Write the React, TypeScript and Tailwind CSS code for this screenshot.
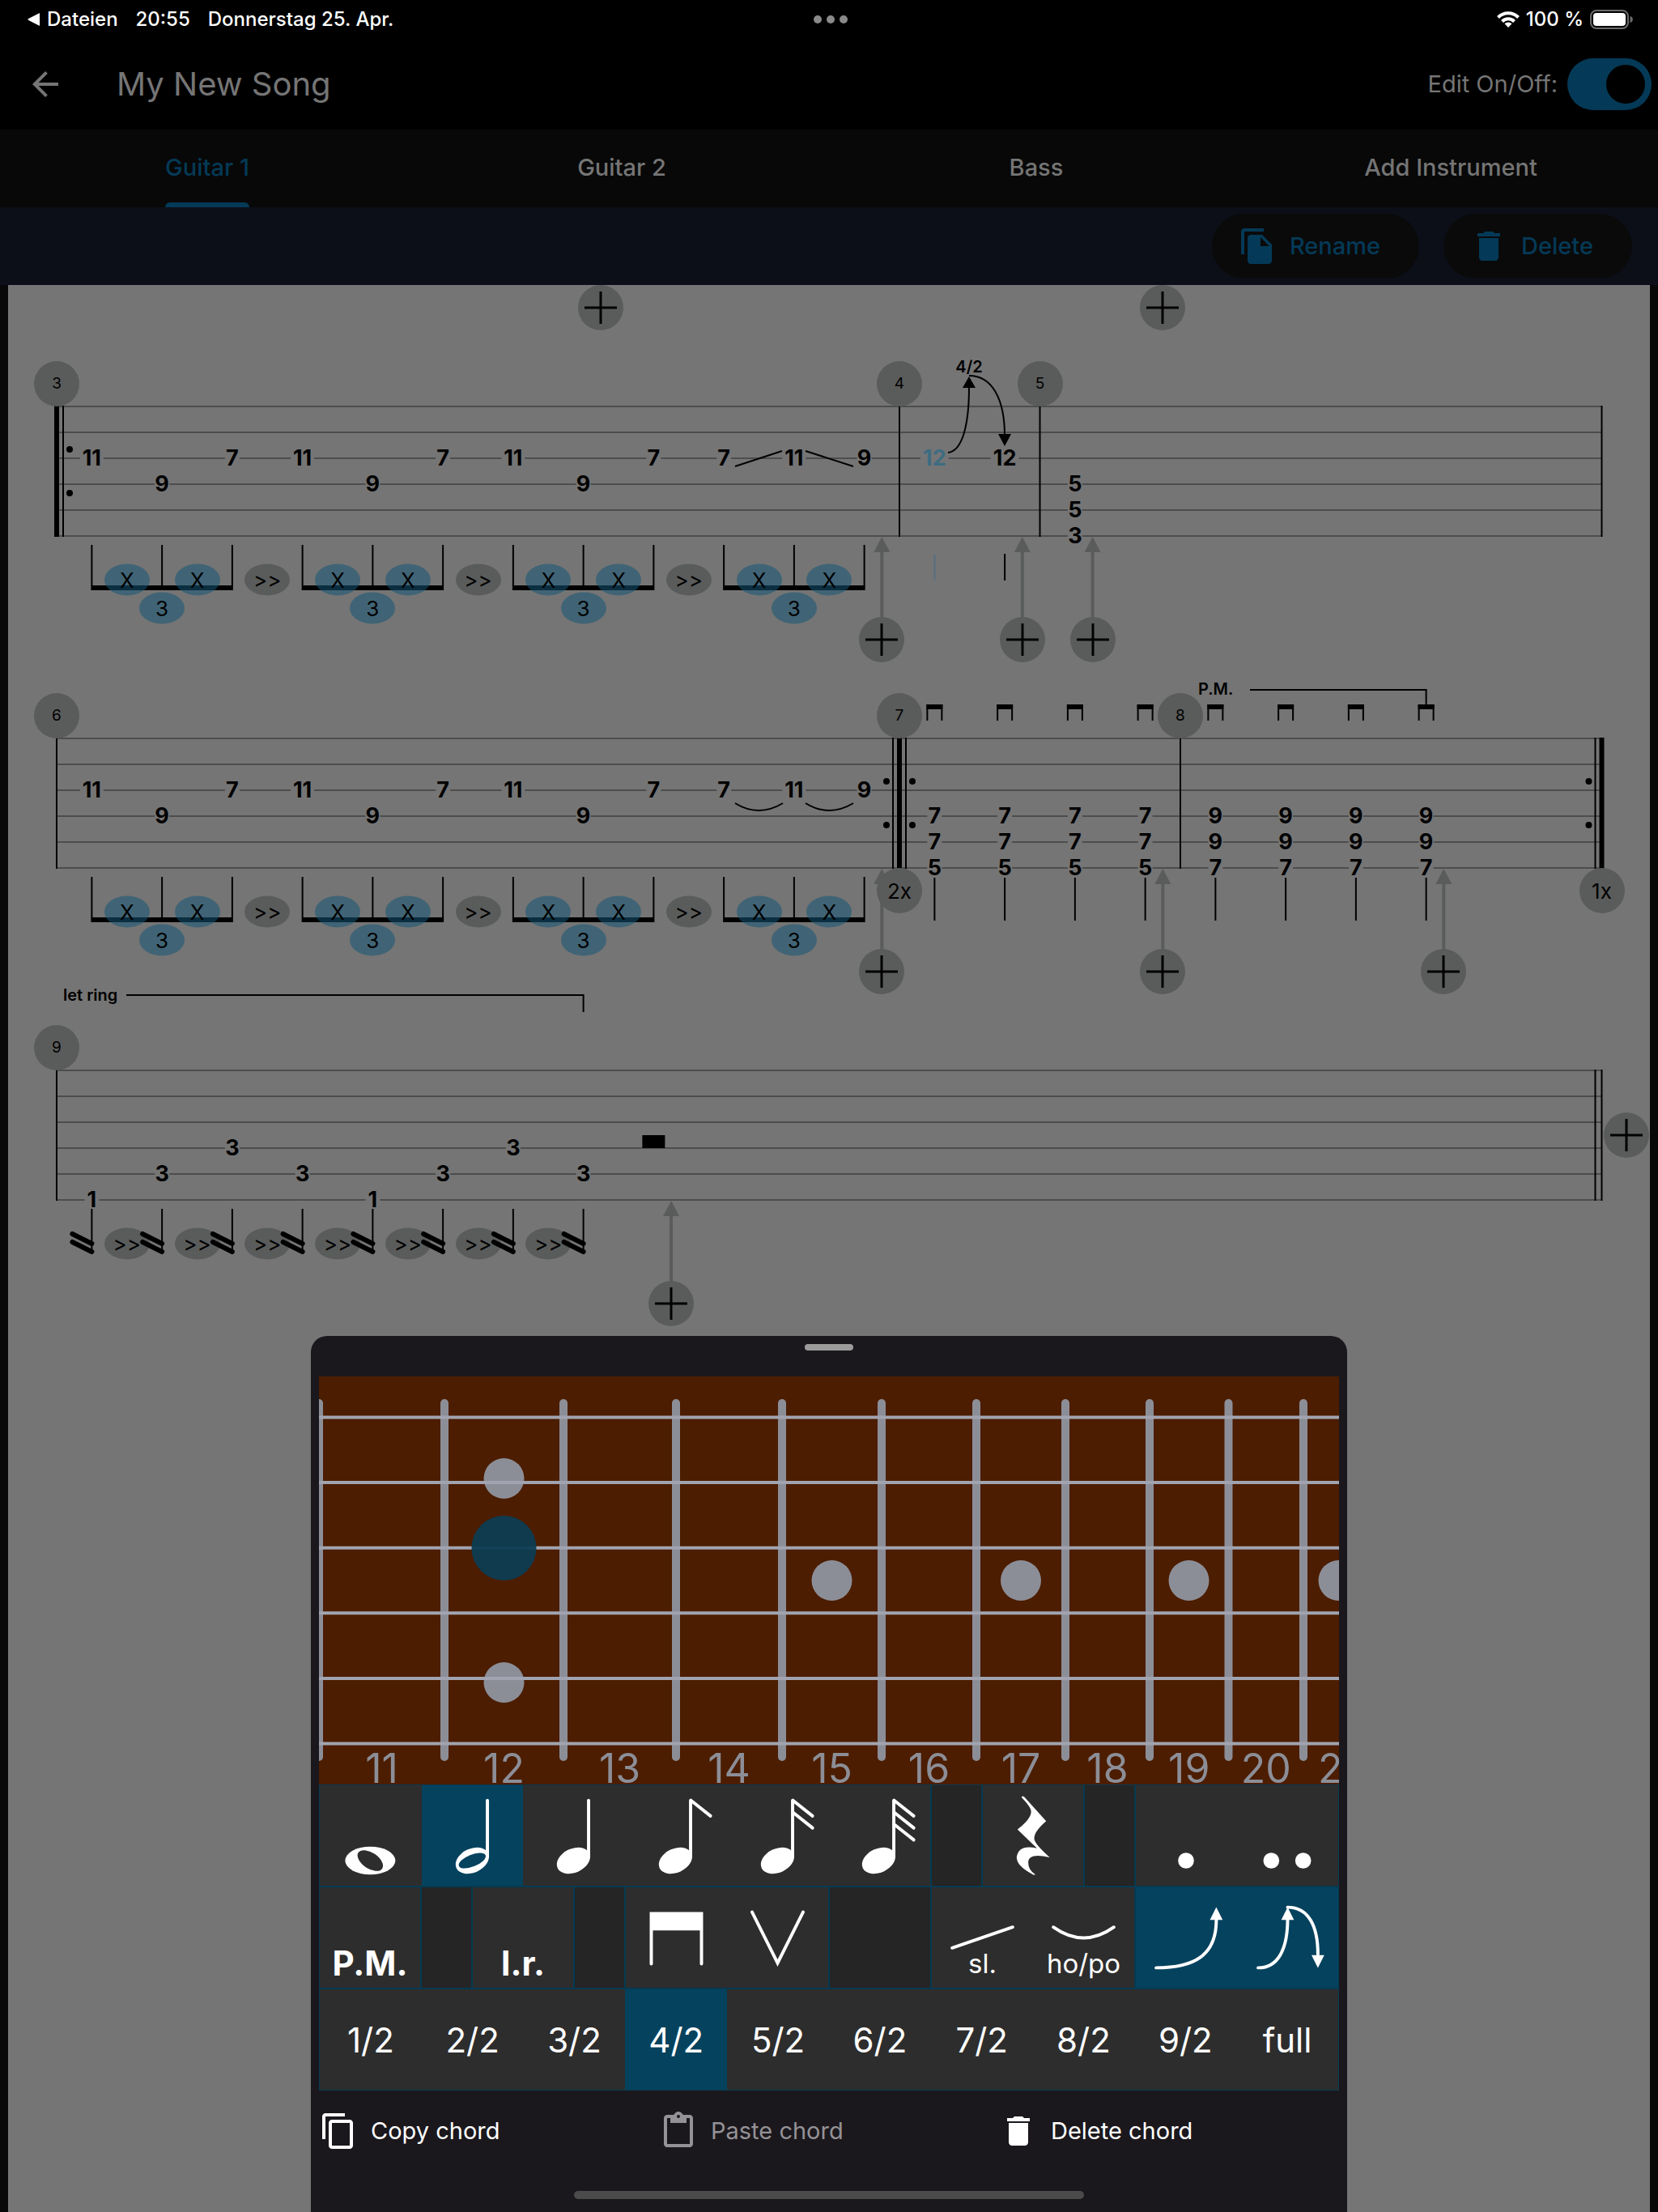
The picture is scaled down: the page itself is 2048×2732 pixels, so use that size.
import React, { useState } from 'react';
import {
  MdArrowBack,
  MdContentCopy,
  MdContentPaste,
  MdDelete,
  MdFileCopy,
} from 'react-icons/md';
import clsx from 'clsx';

// Score geometry, in canvas units
const CANVAS_W = 2028;
const CANVAS_H = 1300;
const LEFT = 60;
const STEP = 86.75;
const LINE_GAP = 32;
const STAFF_H = LINE_GAP * 5;
const STAFF_TOPS = [150, 560, 970];
const PAPER = '#757575';
const GREY = '#5a5c5b';

const col = (index: number) => index * STEP;

interface TabNote {
  at: number;
  line: number;
  fret: string;
  active?: boolean;
}

const tripletNotes: TabNote[] = [
  '11', '9', '7', '11', '9', '7', '11', '9', '7', '7', '11', '9',
].map((fret, i) => ({
  at: i + 0.5,
  line: fret === '9' && i !== 11 ? 3 : 2,
  fret,
}));

const chord = (at: number, frets: string[]): TabNote[] =>
  frets.map((fret, i) => ({ at, line: i + 3, fret }));

const rows: TabNote[][] = [
  [
    ...tripletNotes,
    { at: 12.5, line: 2, fret: '12', active: true },
    { at: 13.5, line: 2, fret: '12' },
    ...chord(14.5, ['5', '5', '3']),
  ],
  [
    ...tripletNotes,
    ...[12.5, 13.5, 14.5, 15.5].flatMap((at) => chord(at, ['7', '7', '5'])),
    ...[16.5, 17.5, 18.5, 19.5].flatMap((at) => chord(at, ['9', '9', '7'])),
  ],
  [5, 4, 3, 4, 5, 4, 3, 4].map((line, i) => ({
    at: i + 0.5,
    line,
    fret: line === 5 ? '1' : '3',
  })),
];

const Staff: React.FC<{ notes: TabNote[] }> = ({ notes }) => (
  <>
    {[0, 1, 2, 3, 4, 5].map((n) => (
      <path key={n} d={`M0 ${n * LINE_GAP}H${col(22)}`} stroke="#4d4d4d" strokeWidth="2" />
    ))}
    {notes.map(({ at, line, fret, active }) => {
      const gap = fret === '11' ? 29 : fret.length === 2 ? 35 : 18;
      return (
        <g key={`${at}-${line}`}>
          <rect x={col(at) - gap / 2} y={line * LINE_GAP - 3} width={gap} height="6" fill={PAPER} />
          <text
            x={col(at)}
            y={line * LINE_GAP + 9}
            textAnchor="middle"
            fontSize="27"
            fontWeight="700"
            fill={active ? '#3d6c82' : '#000'}
          >
            {fret}
          </text>
        </g>
      );
    })}
  </>
);

const Bar: React.FC<{ at: number; width?: number; shift?: number }> = ({ at, width = 2, shift = 0 }) => (
  <path d={`M${col(at) + shift} -1V${STAFF_H + 1}`} stroke="#000" strokeWidth={width} />
);

const RepeatDots: React.FC<{ at: number; shift: number }> = ({ at, shift }) => (
  <>
    <circle cx={col(at) + shift} cy="53" r="4" />
    <circle cx={col(at) + shift} cy="107" r="4" />
  </>
);

const TripletBeams = () => (
  <>
    {[0.5, 3.5, 6.5, 9.5].map((at) => (
      <g key={at} stroke="#000" strokeWidth="2">
        <path d={`M${col(at)} 171V227M${col(at + 1)} 171V227M${col(at + 2)} 171V227`} />
        <path d={`M${col(at)} 224H${col(at + 2)}`} strokeWidth="6" />
      </g>
    ))}
  </>
);

const InsertArrow: React.FC<{ at: number }> = ({ at }) => (
  <g transform={`translate(${col(at)} 0)`} fill={GREY}>
    <path d="M0 161L10 180H-10Z" />
    <path d="M-2 178H2V264H-2Z" />
  </g>
);

const Score = () => (
  <svg
    viewBox={`0 0 ${CANVAS_W} ${CANVAS_H}`}
    className="block w-full"
    fontFamily="Inter, 'Liberation Sans', sans-serif"
    aria-label="Guitar 1 tablature"
  >
    {/* bars 3 - 5 */}
    <g transform={`translate(${LEFT} ${STAFF_TOPS[0]})`}>
      <Staff notes={rows[0]} />
      <Bar at={0} width={6} />
      <Bar at={0} shift={8} />
      <RepeatDots at={0} shift={16} />
      <Bar at={12} />
      <Bar at={14} />
      <Bar at={22} />
      <TripletBeams />
      <path d="M838 74L896 55M925 55L984 74" stroke="#000" strokeWidth="2" />
      {/* bend and release */}
      <g fill="none" stroke="#000" strokeWidth="2">
        <path d="M1101 57C1119 55 1127 22 1127 -24" />
        <path d="M1127 -38C1155 -38 1171 -10 1171 36" />
      </g>
      <path d="M1127 -37L1135 -23H1119ZM1171 49L1163 34H1179Z" />
      <text x="1127" y="-42" textAnchor="middle" fontSize="20" fontWeight="600">
        4/2
      </text>
      <path d={`M${col(12.5)} 183V214`} stroke="#566f80" strokeWidth="2" />
      <path d={`M${col(13.5)} 182V215`} stroke="#000" strokeWidth="2" />
      {[11.75, 13.75, 14.75].map((at) => (
        <InsertArrow key={at} at={at} />
      ))}
    </g>

    {/* bars 6 - 8 */}
    <g transform={`translate(${LEFT} ${STAFF_TOPS[1]})`}>
      <Staff notes={rows[1]} />
      <Bar at={0} />
      <Bar at={12} shift={-8} />
      <Bar at={12} width={6} />
      <Bar at={12} shift={8} />
      <RepeatDots at={12} shift={-16} />
      <RepeatDots at={12} shift={16} />
      <Bar at={16} />
      <Bar at={22} shift={-8} />
      <Bar at={22} width={6} />
      <RepeatDots at={22} shift={-16} />
      <TripletBeams />
      <path d="M838 80Q867 98 897 80M925 80Q954 98 984 80" fill="none" stroke="#000" strokeWidth="2" />
      {[12.5, 13.5, 14.5, 15.5, 16.5, 17.5, 18.5, 19.5].map((at) => (
        <g key={at} transform={`translate(${col(at)} 0)`}>
          <path d="M-9 -22V-41H9V-22" fill="none" stroke="#000" strokeWidth="2" />
          <path d="M-10 -42H10V-36H-10Z" />
          <path d="M0 172V225" stroke="#000" strokeWidth="2" />
        </g>
      ))}
      <text x="1410" y="-54" fontSize="20" fontWeight="600">
        P.M.
      </text>
      <path d={`M1474 -60H${col(19.5)}V-41`} fill="none" stroke="#000" strokeWidth="2" />
      {[11.75, 15.75, 19.75].map((at) => (
        <InsertArrow key={at} at={at} />
      ))}
    </g>

    {/* bar 9 */}
    <g transform={`translate(${LEFT} ${STAFF_TOPS[2]})`}>
      <Staff notes={rows[2]} />
      <Bar at={0} />
      <Bar at={22} shift={-8} />
      <Bar at={22} />
      <path d={`M${col(8.5) - 14} 80h28v16h-28Z`} />
      <text x="8" y="-86" fontSize="20" fontWeight="600">
        let ring
      </text>
      <path d={`M86 -93H${col(7.5)}V-72`} fill="none" stroke="#000" strokeWidth="2" />
      <InsertArrow at={8.75} />
    </g>
  </svg>
);

// Tremolo strokes lie over the merge buttons
const Tremolo = () => (
  <svg
    viewBox={`0 0 ${CANVAS_W} ${CANVAS_H}`}
    className="pointer-events-none absolute inset-0 block w-full"
    aria-hidden="true"
  >
    <g transform={`translate(${LEFT} ${STAFF_TOPS[2]})`} stroke="#000">
      {rows[2].map(({ at }) => (
        <g key={at} transform={`translate(${col(at)} 0)`}>
          <path d="M0 171V224" strokeWidth="2" />
          <path d="M-24 202L0 214M-24 212L0 224" strokeWidth="6" strokeLinecap="round" />
        </g>
      ))}
    </g>
  </svg>
);

interface SpotProps {
  row: number;
  at: number;
  y: number;
  label: string;
  className: string;
  children: React.ReactNode;
}

const Spot: React.FC<SpotProps> = ({ row, at, y, label, className, children }) => (
  <button
    type="button"
    aria-label={label}
    className={clsx(
      'absolute flex -translate-x-1/2 -translate-y-1/2 items-center justify-center text-black',
      className
    )}
    style={{
      left: `${((LEFT + col(at)) / CANVAS_W) * 100}%`,
      top: `${((STAFF_TOPS[0] + row * 410 + y) / CANVAS_H) * 100}%`,
    }}
  >
    {children}
  </button>
);

const AddSpot: React.FC<{ row: number; at: number; y?: number }> = ({ row, at, y = 288 }) => (
  <Spot row={row} at={at} y={y} label="Insert" className="size-14 rounded-full bg-[#5a5c5b]">
    <svg viewBox="0 0 40 40" className="size-10" stroke="currentColor" strokeWidth="3">
      <path d="M20 0V40M0 20H40" />
    </svg>
  </Spot>
);

const round = 'size-14 rounded-full bg-[#5a5c5b]';
const greyPill = 'h-[39px] w-14 rounded-[50%] bg-[#5a5c5b] text-[26px]';
const bluePill = 'h-[39px] w-14 rounded-[50%] bg-[#145674]/55 text-[26px]';

const ScoreControls = () => (
  <>
    <AddSpot row={-1} at={7.75} />
    <AddSpot row={-1} at={15.75} />
    {[11.75, 13.75, 14.75].map((at) => (
      <AddSpot key={at} row={0} at={at} />
    ))}
    {[11.75, 15.75, 19.75].map((at) => (
      <AddSpot key={at} row={1} at={at} />
    ))}
    <AddSpot row={2} at={8.75} />
    <AddSpot row={2} at={22.35} y={80} />

    {[
      [0, 0, 3],
      [0, 12, 4],
      [0, 14, 5],
      [1, 0, 6],
      [1, 12, 7],
      [1, 16, 8],
      [2, 0, 9],
    ].map(([row, at, bar]) => (
      <Spot key={bar} row={row} at={at} y={-28} label={`Bar ${bar}`} className={clsx(round, 'text-[19px]')}>
        {bar}
      </Spot>
    ))}
    <Spot row={1} at={12} y={188} label="Repeat 2x" className={clsx(round, 'text-[26px]')}>
      2x
    </Spot>
    <Spot row={1} at={22} y={188} label="Repeat 1x" className={clsx(round, 'text-[26px]')}>
      1x
    </Spot>

    {[0, 1].map((row) =>
      [0, 3, 6, 9].map((start) => (
        <React.Fragment key={`${row}-${start}`}>
          <Spot row={row} at={start + 1} y={214} label="Split" className={bluePill}>
            X
          </Spot>
          <Spot row={row} at={start + 2} y={214} label="Split" className={bluePill}>
            X
          </Spot>
          <Spot row={row} at={start + 1.5} y={249} label="Triplet" className={bluePill}>
            3
          </Spot>
          {start < 9 && (
            <Spot row={row} at={start + 3} y={214} label="Merge" className={greyPill}>
              &gt;&gt;
            </Spot>
          )}
        </React.Fragment>
      ))
    )}
    {[1, 2, 3, 4, 5, 6, 7].map((at) => (
      <Spot key={at} row={2} at={at} y={214} label="Merge" className={greyPill}>
        &gt;&gt;
      </Spot>
    ))}
  </>
);

const StatusBar = () => (
  <div className="grid h-12 grid-cols-3 items-center bg-black pr-[30px] pl-[34px] text-2xl font-medium text-white">
    <div className="flex items-center gap-[22px] whitespace-nowrap">
      <span className="flex items-center gap-2">
        <svg viewBox="0 0 16 16" className="size-4" fill="currentColor">
          <path d="M15 0.5V15.5Q15 16 14 15.6L0.8 8.8Q0 8 0.8 7.2L14 0.4Q15 0 15 0.5Z" />
        </svg>
        Dateien
      </span>
      <span>20:55</span>
      <span>Donnerstag 25. Apr.</span>
    </div>
    <div className="flex justify-center gap-1.5">
      <span className="size-2.5 rounded-full bg-[#8a8a8a]" />
      <span className="size-2.5 rounded-full bg-[#8a8a8a]" />
      <span className="size-2.5 rounded-full bg-[#8a8a8a]" />
    </div>
    <div className="flex items-center justify-end gap-2 whitespace-nowrap">
      <svg viewBox="0 0 28 20" className="h-5 w-7" fill="none" stroke="currentColor" strokeWidth="4">
        <path d="M1.5 7.5A17.5 17.5 0 0 1 26.5 7.5" />
        <path d="M6.5 12.5A10.5 10.5 0 0 1 21.5 12.5" />
        <path d="M14 20L9.5 15.3A6.5 6.5 0 0 1 18.5 15.3Z" fill="currentColor" stroke="none" />
      </svg>
      <span>100 %</span>
      <svg viewBox="0 0 54 24" className="h-6 w-[54px]">
        <rect x="1" y="1" width="46" height="22" rx="7" fill="none" stroke="#6b6b6b" strokeWidth="2" />
        <rect x="4" y="4" width="40" height="16" rx="4" fill="#fff" />
        <path d="M49.5 8C54 9 54 15 49.5 16Z" fill="#6b6b6b" />
      </svg>
    </div>
  </div>
);

const instruments = ['Guitar 1', 'Guitar 2', 'Bass', 'Add Instrument'];

const Tabs = () => {
  const [current, setCurrent] = useState('Guitar 1');

  return (
    <div role="tablist" className="grid h-24 grid-cols-4 bg-[#080808] text-[29px] font-medium">
      {instruments.map((name) => (
        <button
          key={name}
          type="button"
          role="tab"
          aria-selected={name === current}
          onClick={() => setCurrent(name)}
          className="flex justify-center"
        >
          <span
            className={clsx(
              'relative flex h-full items-center pb-0.5',
              name === current ? 'text-[#043a57]' : 'text-[#757575]'
            )}
          >
            {name}
            {name === current && (
              <span className="absolute inset-x-0 bottom-0 h-1.5 rounded-t-md bg-[#043a57]" />
            )}
          </span>
        </button>
      ))}
    </div>
  );
};

// Fret positions on the visible part of the neck
const frets = [0, 155, 302, 441, 572, 695, 812, 922, 1026, 1123.5, 1216, 1303];

const Fretboard = () => (
  <div className="overflow-x-clip bg-[#4c1d00]">
    <svg
      viewBox="0 0 1260 504"
      className="block w-full overflow-visible"
      fontFamily="Inter, 'Liberation Sans', sans-serif"
      aria-label="Fretboard"
    >
      <g stroke="#8c8e97" strokeWidth="10" strokeLinecap="round">
        {frets.map((x) => (
          <path key={x} d={`M${x} 33V470`} />
        ))}
      </g>
      <g fill="#8c8e97">
        <circle cx="228.5" cy="126" r="25" />
        <circle cx="228.5" cy="378" r="25" />
        <circle cx="633.5" cy="252" r="25" />
        <circle cx="867" cy="252" r="25" />
        <circle cx="1074.5" cy="252" r="25" />
        <circle cx="1259.5" cy="252" r="25" />
      </g>
      <g stroke="#a1a4b0" strokeWidth="4">
        {[0, 1, 2, 3, 4, 5].map((n) => (
          <path key={n} d={`M0 ${50.5 + n * 80.6}H1260`} />
        ))}
      </g>
      <circle cx="228.5" cy="212" r="40" fill="#0d3c52" fillOpacity="0.95" />
      <g fill="#8c8e97" fontSize="50" textAnchor="middle">
        {frets.slice(1).map((x, i) => (
          <text key={x} x={(x + frets[i]) / 2} y="502">
            {i + 11}
          </text>
        ))}
      </g>
    </svg>
  </div>
);

const Glyph: React.FC<{ children: React.ReactNode }> = ({ children }) => (
  <svg viewBox="0 0 126 126" className="size-full" fill="currentColor" aria-hidden="true">
    {children}
  </svg>
);

const stroke = {
  fill: 'none',
  stroke: 'currentColor',
  strokeWidth: 4,
  strokeLinecap: 'round' as const,
};

const Note: React.FC<{ flags?: number; hollow?: boolean }> = ({ flags = 0, hollow }) => (
  <Glyph>
    <ellipse cx="62.5" cy="94.5" rx="22" ry="15" transform="rotate(-25 62.5 94.5)" />
    {hollow && (
      <ellipse cx="62.5" cy="94.5" rx="18" ry="7.5" transform="rotate(-22 62.5 94.5)" fill="#05425e" />
    )}
    <path d="M81.500 19V90" {...stroke} />
    {[0, 1, 2].slice(0, flags).map((n) => (
      <path key={n} d={`M82 ${19 + n * 15}L106.5 ${38.5 + n * 15}`} {...stroke} />
    ))}
  </Glyph>
);

interface Cell {
  name: string;
  content: React.ReactNode;
  on?: boolean;
}

interface Group {
  span: string;
  cells: Cell[];
}

const spacer = (span: string): Group => ({ span, cells: [] });

const markText = 'flex size-full items-end justify-center pb-2 text-[42px] leading-[44px] font-bold';
const captionText = 'absolute inset-x-0 bottom-3 text-center text-[33px] leading-9';

const toolbar: Group[] = [
  {
    span: 'col-span-12',
    cells: [
      {
        name: 'Whole note',
        content: (
          <Glyph>
            <ellipse cx="62.5" cy="94.5" rx="31.5" ry="17.5" />
            <ellipse cx="62.5" cy="94.5" rx="18" ry="10" transform="rotate(34 62.5 94.5)" fill="#2d2d2d" />
          </Glyph>
        ),
      },
      { name: 'Half note', content: <Note hollow />, on: true },
      { name: 'Quarter note', content: <Note /> },
      { name: 'Eighth note', content: <Note flags={1} /> },
      { name: 'Sixteenth note', content: <Note flags={2} /> },
      { name: 'Thirty-second note', content: <Note flags={3} /> },
    ],
  },
  spacer('col-span-1'),
  {
    span: 'col-span-2',
    cells: [
      {
        name: 'Rest',
        content: (
          <Glyph>
            <path d="M48.5 15Q50 12.5 52 14.5L79.5 45Q62 60 65 69Q67 75 84 90.5Q57 84 57 97Q57 106 66 112Q64 113 62 111.5Q42 101 42.5 90Q45 73.5 68 79L43.5 55.5Q66 38 59 28Q57 24 48.5 15Z" />
          </Glyph>
        ),
      },
    ],
  },
  spacer('col-span-1'),
  {
    span: 'col-span-4',
    cells: [
      { name: 'Dotted', content: <Glyph><circle cx="62.5" cy="94.5" r="10" /></Glyph> },
      {
        name: 'Double dotted',
        content: (
          <Glyph>
            <circle cx="42.5" cy="94.5" r="10" />
            <circle cx="82.5" cy="94.5" r="10" />
          </Glyph>
        ),
      },
    ],
  },
  { span: 'col-span-2', cells: [{ name: 'Palm mute', content: <span className={markText}>P.M.</span> }] },
  spacer('col-span-1'),
  { span: 'col-span-2', cells: [{ name: 'Let ring', content: <span className={markText}>l.r.</span> }] },
  spacer('col-span-1'),
  {
    span: 'col-span-4',
    cells: [
      {
        name: 'Down stroke',
        content: (
          <Glyph>
            <path d="M31.5 96V33H94.5V96" {...stroke} />
            <path d="M31 32H95V54H31Z" />
          </Glyph>
        ),
      },
      {
        name: 'Up stroke',
        content: <Glyph><path d="M31 31L63 95L95 31" {...stroke} /></Glyph>,
      },
    ],
  },
  spacer('col-span-2'),
  {
    span: 'col-span-4',
    cells: [
      {
        name: 'Slide',
        content: (
          <>
            <Glyph><path d="M25 76L101 50" {...stroke} /></Glyph>
            <span className={captionText}>sl.</span>
          </>
        ),
      },
      {
        name: 'Hammer-on / pull-off',
        content: (
          <>
            <Glyph><path d="M25 50Q63 77 101 50" {...stroke} /></Glyph>
            <span className={captionText}>ho/po</span>
          </>
        ),
      },
    ],
  },
  {
    span: 'col-span-4',
    cells: [
      {
        name: 'Bend',
        on: true,
        content: (
          <Glyph>
            <path d="M25 101C72 101 101 86 100.5 40" {...stroke} />
            <path d="M100.5 25L108.5 41H92.5Z" />
          </Glyph>
        ),
      },
      {
        name: 'Bend and release',
        on: true,
        content: (
          <Glyph>
            <path d="M26 101C52 101 63 76 63 40M63 25C90 25 101 50 101 84" {...stroke} />
            <path d="M63 25L71 41H55ZM101 101L93 85H109Z" />
          </Glyph>
        ),
      },
    ],
  },
  {
    span: 'col-span-20',
    cells: ['1/2', '2/2', '3/2', '4/2', '5/2', '6/2', '7/2', '8/2', '9/2', 'full'].map((step) => ({
      name: step,
      on: step === '4/2',
      content: <span className="text-[42px]">{step}</span>,
    })),
  },
];

const Toolbar = () => (
  <div className="grid auto-rows-[126px] grid-cols-20 bg-[#252525]">
    {toolbar.map(({ span, cells }, i) => (
      <div key={i} className={clsx('flex border border-[#053a52]', span)}>
        {cells.map(({ name, content, on }) => (
          <button
            key={name}
            type="button"
            aria-label={name}
            aria-pressed={!!on}
            className={clsx(
              'relative flex min-w-0 flex-1 items-center justify-center',
              on ? 'bg-[#05425e]' : 'bg-[#2d2d2d]'
            )}
          >
            {content}
          </button>
        ))}
      </div>
    ))}
  </div>
);

const ChordSheet = () => (
  <section
    role="dialog"
    aria-label="Edit chord"
    className="fixed bottom-0 left-1/2 flex w-full max-w-[1280px] -translate-x-1/2 flex-col rounded-t-[20px] bg-[#1b181d] px-2.5 text-white"
  >
    <div className="flex h-[50px] justify-center pt-2.5">
      <span className="h-2 w-15 rounded-full bg-[#9b9b9b]" />
    </div>
    <Fretboard />
    <Toolbar />
    <div className="grid h-[100px] grid-cols-3 text-[29px]">
      <button type="button" className="flex items-center gap-4">
        <MdContentCopy className="size-12" />
        Copy chord
      </button>
      <button type="button" disabled className="flex items-center gap-4 text-[#949296]">
        <MdContentPaste className="size-12" />
        Paste chord
      </button>
      <button type="button" className="flex items-center gap-4">
        <MdDelete className="size-12" />
        Delete chord
      </button>
    </div>
    <div className="mt-6 mb-4 h-2.5 w-1/2 self-center rounded-full bg-[#4b4b4b]" />
  </section>
);

const App = () => {
  const [editing, setEditing] = useState(true);

  return (
    <div className="flex min-h-screen flex-col bg-[#080808] font-[Inter,'Liberation_Sans',sans-serif]">
      <StatusBar />

      <header className="flex h-28 items-center bg-black pr-2 pl-8 text-[#757575]">
        <button type="button" aria-label="Back">
          <MdArrowBack className="size-12" />
        </button>
        <h1 className="ml-16 flex-1 text-[40px]">My New Song</h1>
        <label htmlFor="edit-mode" className="mr-3 text-[29px]">
          Edit On/Off:
        </label>
        <input
          id="edit-mode"
          type="checkbox"
          role="switch"
          checked={editing}
          onChange={(e) => setEditing(e.target.checked)}
          className="flex h-16 w-26 appearance-none items-center rounded-full bg-[#333] px-2 before:size-12 before:rounded-full before:bg-black checked:justify-end checked:bg-[#043a57]"
        />
      </header>

      <Tabs />

      <div className="flex h-24 items-center justify-end gap-[30px] bg-[#0c0f18] pr-8 text-[29px] font-medium text-[#043a57]">
        <button type="button" className="flex h-20 items-center gap-4 rounded-full bg-[#0a0a0b] pr-12 pl-8">
          <MdFileCopy className="size-12" />
          Rename
        </button>
        <button type="button" className="flex h-20 items-center gap-4 rounded-full bg-[#0a0a0b] pr-12 pl-8">
          <MdDelete className="size-12" />
          Delete
        </button>
      </div>

      <main className="mx-2.5 flex-1 bg-[#757575]">
        <div className="relative">
          <Score />
          <ScoreControls />
          <Tremolo />
        </div>
      </main>

      <ChordSheet />
    </div>
  );
};

export default App;
